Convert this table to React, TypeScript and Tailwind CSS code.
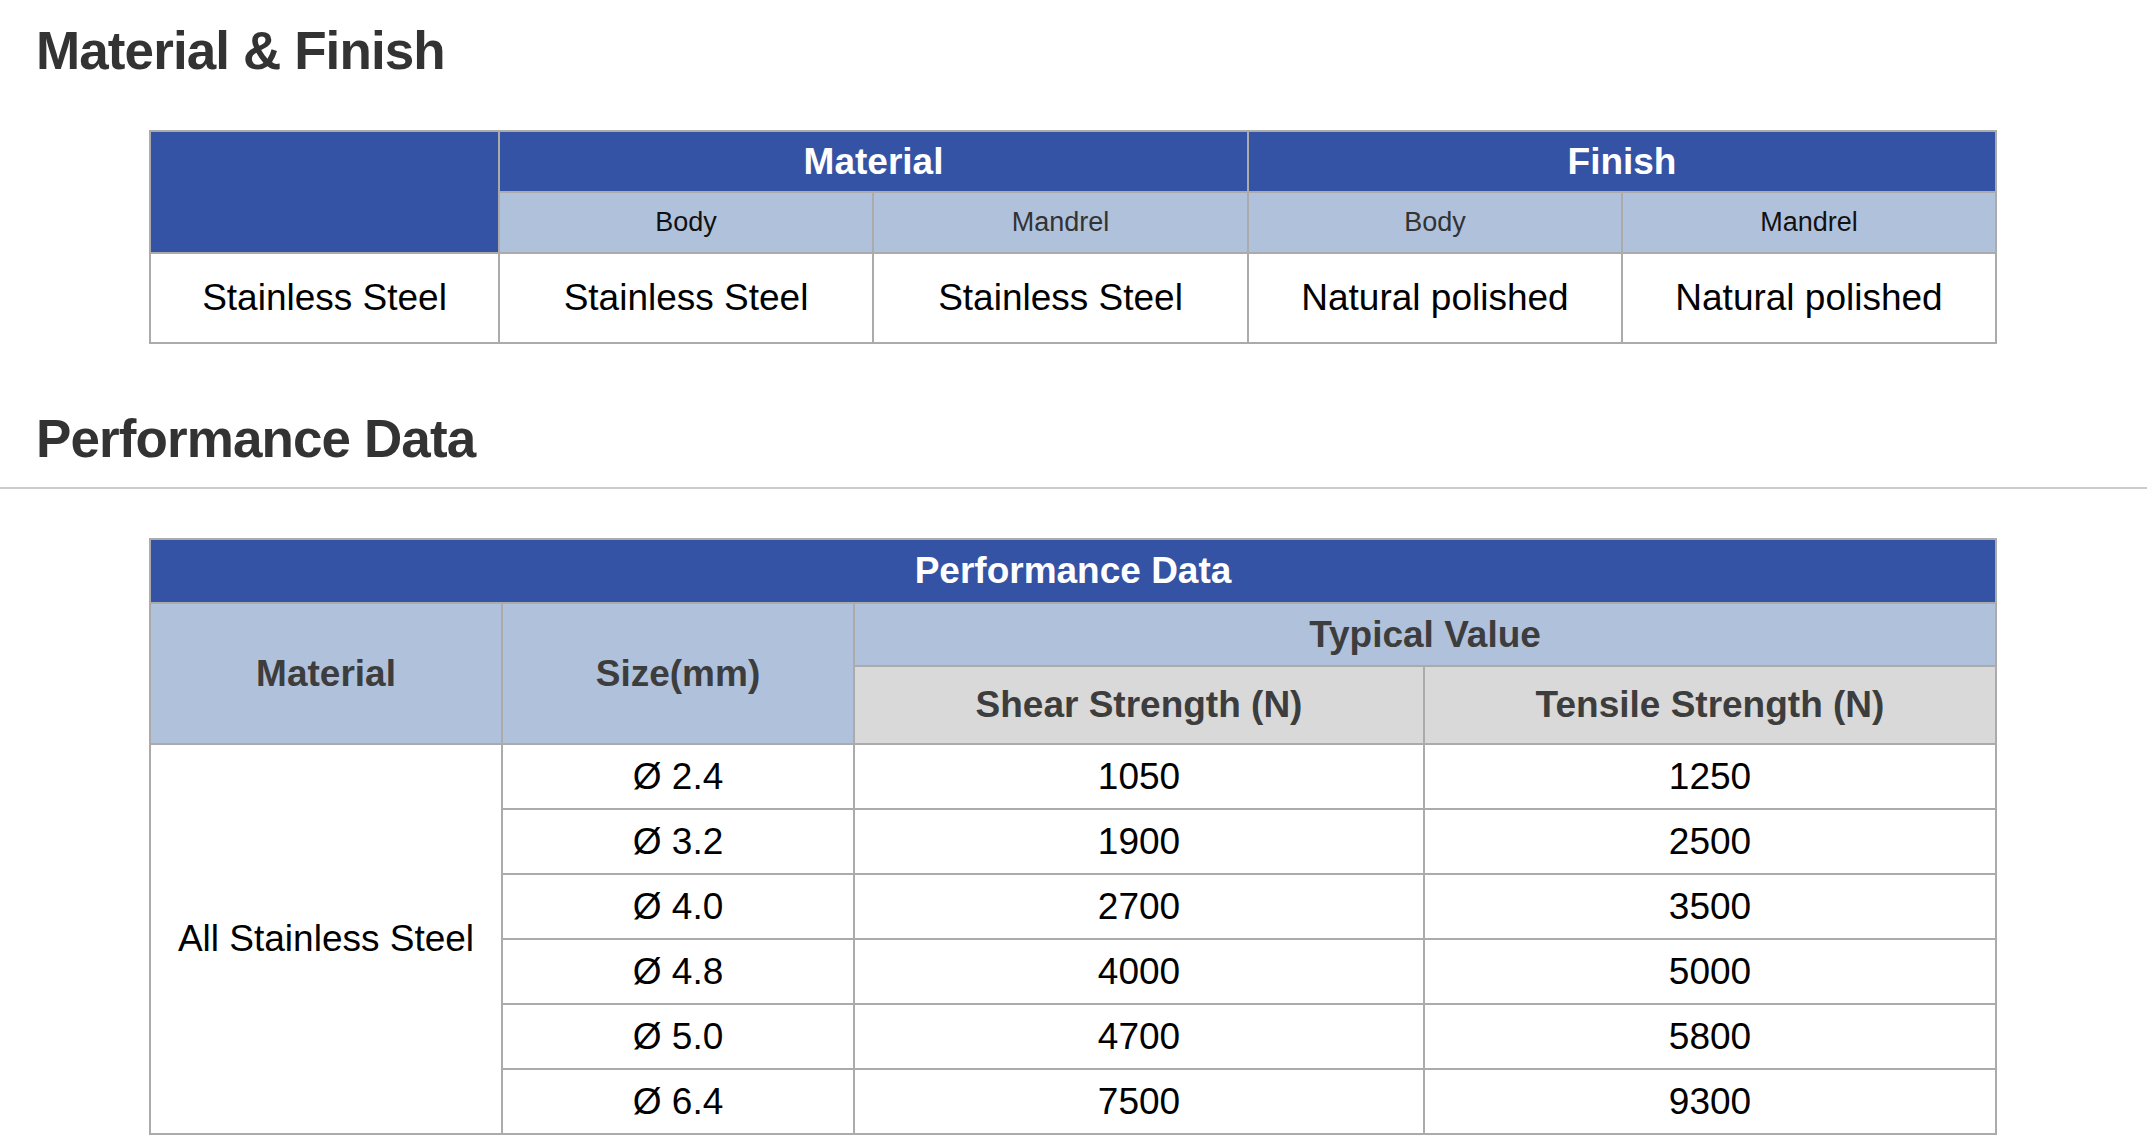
const materialRow = ['Stainless Steel', 'Stainless Steel', 'Stainless Steel', 'Natural polished', 'Natural polished'];

const performance = [
  { size: 'Ø 2.4', shear: '1050', tensile: '1250' },
  { size: 'Ø 3.2', shear: '1900', tensile: '2500' },
  { size: 'Ø 4.0', shear: '2700', tensile: '3500' },
  { size: 'Ø 4.8', shear: '4000', tensile: '5000' },
  { size: 'Ø 5.0', shear: '4700', tensile: '5800' },
  { size: 'Ø 6.4', shear: '7500', tensile: '9300' },
];

const cell = 'border-2 border-[#ababab] text-center align-middle p-0';

function SectionTitle({ children }: { children: string }) {
  return (
    <h2 className="pl-[36px] text-[53px] font-bold leading-none tracking-[-0.9px] text-[#333333]">{children}</h2>
  );
}

export default function App() {
  return (
    <div className="min-h-screen bg-white pt-[24px] pb-[13px] font-['Liberation_Sans',Arial,sans-serif]">
      <SectionTitle>Material &amp; Finish</SectionTitle>

      <table className="mt-[53px] ml-[149px] w-[1846px] table-fixed border-collapse">
        <colgroup>
          <col className="w-[349px]" />
          <col className="w-[374px]" />
          <col className="w-[375px]" />
          <col className="w-[374px]" />
          <col className="w-[374px]" />
        </colgroup>
        <thead>
          <tr className="h-[61px]">
            <th rowSpan={2} className={`${cell} bg-[#3453a5]`} />
            <th colSpan={2} className={`${cell} bg-[#3453a5] text-[37px] font-bold text-white`}>
              Material
            </th>
            <th colSpan={2} className={`${cell} bg-[#3453a5] text-[37px] font-bold text-white`}>
              Finish
            </th>
          </tr>
          <tr className="h-[61px]">
            <th className={`${cell} bg-[#b0c1dc] text-[27px] font-normal text-[#111111]`}>Body</th>
            <th className={`${cell} bg-[#b0c1dc] text-[27px] font-normal text-[#333333]`}>Mandrel</th>
            <th className={`${cell} bg-[#b0c1dc] text-[27px] font-normal text-[#333333]`}>Body</th>
            <th className={`${cell} bg-[#b0c1dc] text-[27px] font-normal text-[#111111]`}>Mandrel</th>
          </tr>
        </thead>
        <tbody>
          <tr className="h-[90px]">
            {materialRow.map((v, i) => (
              <td key={i} className={`${cell} text-[37px] text-black`}>
                {v}
              </td>
            ))}
          </tr>
        </tbody>
      </table>

      <div className="mt-[68px]">
        <SectionTitle>Performance Data</SectionTitle>
      </div>
      <div className="mt-[22px] h-[2px] w-full bg-[#cccccc]" />

      <table className="mt-[49px] ml-[149px] w-[1846px] table-fixed border-collapse">
        <colgroup>
          <col className="w-[352px]" />
          <col className="w-[352px]" />
          <col className="w-[570px]" />
          <col className="w-[572px]" />
        </colgroup>
        <thead>
          <tr className="h-[64px]">
            <th colSpan={4} className={`${cell} bg-[#3453a5] text-[37px] font-bold text-white`}>
              Performance Data
            </th>
          </tr>
          <tr className="h-[63px]">
            <th rowSpan={2} className={`${cell} bg-[#b0c1dc] text-[37px] font-bold text-[#3d3d3d]`}>
              Material
            </th>
            <th rowSpan={2} className={`${cell} bg-[#b0c1dc] text-[37px] font-bold text-[#3d3d3d]`}>
              Size(mm)
            </th>
            <th colSpan={2} className={`${cell} bg-[#b0c1dc] text-[37px] font-bold text-[#3d3d3d]`}>
              Typical Value
            </th>
          </tr>
          <tr className="h-[78px]">
            <th className={`${cell} bg-[#d9d9d9] text-[37px] font-bold text-[#3d3d3d]`}>Shear Strength (N)</th>
            <th className={`${cell} bg-[#d9d9d9] text-[37px] font-bold text-[#3d3d3d]`}>Tensile Strength (N)</th>
          </tr>
        </thead>
        <tbody>
          {performance.map((row, i) => (
            <tr key={row.size} className="h-[65px]">
              {i === 0 && (
                <td rowSpan={performance.length} className={`${cell} text-[37px] text-black`}>
                  All Stainless Steel
                </td>
              )}
              <td className={`${cell} text-[37px] text-black`}>{row.size}</td>
              <td className={`${cell} text-[37px] text-black`}>{row.shear}</td>
              <td className={`${cell} text-[37px] text-black`}>{row.tensile}</td>
            </tr>
          ))}
        </tbody>
      </table>
    </div>
  );
}
